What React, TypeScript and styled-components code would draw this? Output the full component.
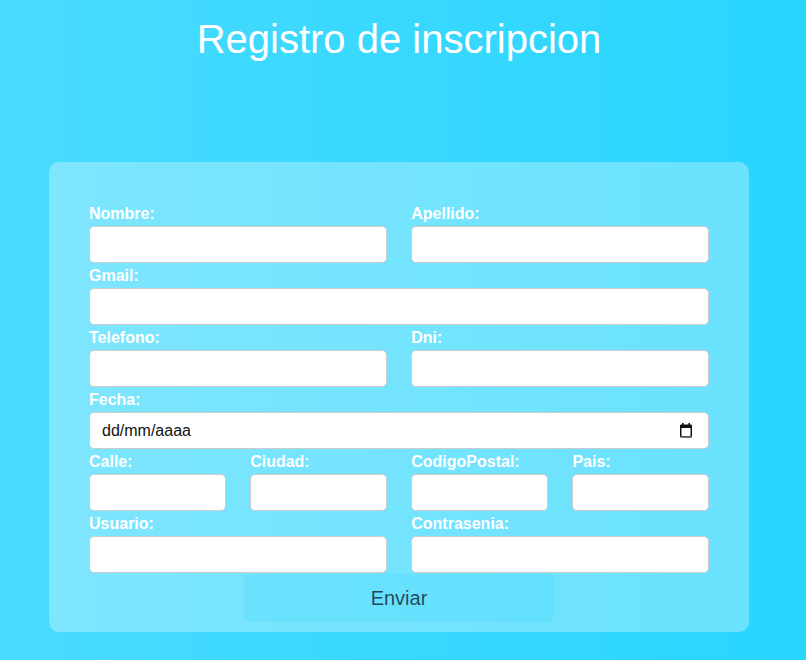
import React from "react";
import styled, { createGlobalStyle } from "styled-components";

const GlobalStyle = createGlobalStyle`
  html, body {
    margin: 0;
    padding: 0;
  }
  body {
    font-family: "Liberation Sans", Arial, sans-serif;
  }
  * { box-sizing: border-box; }
`;

const Page = styled.div`
  min-height: 100vh;
  background: linear-gradient(to right, #49dbfe, #28d5fe);
  display: flex;
  flex-direction: column;
  align-items: center;
  padding: 16px 8px 0 0;
`;

const Title = styled.h1`
  margin: 0;
  font-size: 40px;
  line-height: 46px;
  font-weight: normal;
  color: #ffffff;
  text-align: center;
`;

const Card = styled.form`
  margin-top: 100px;
  width: 700px;
  padding: 39px 40px 10px;
  background: rgba(255, 255, 255, 0.3);
  border-radius: 10px;
  display: flex;
  flex-direction: column;
  align-items: center;
`;

const Grid = styled.div`
  width: 100%;
  display: grid;
  grid-template-columns: repeat(4, 1fr);
  column-gap: 24.5px;
`;

const Field = styled.div<{ $span: number }>`
  grid-column: span ${(p) => p.$span};
  display: flex;
  flex-direction: column;
  position: relative;
`;

const Label = styled.label`
  display: block;
  margin-top: 4px;
  margin-bottom: 3px;
  font-size: 16px;
  line-height: 18px;
  font-weight: bold;
  color: #ffffff;
`;

const Input = styled.input`
  width: 100%;
  height: 37px;
  margin: 0;
  padding: 0 12px;
  border: 1px solid #cccccc;
  border-radius: 5px;
  background: #ffffff;
  font-family: "Liberation Sans", Arial, sans-serif;
  font-size: 16px;
  color: #111111;
  outline: none;
  &::placeholder {
    color: #111111;
  }
`;

const CalendarIcon = styled.svg`
  position: absolute;
  right: 16px;
  bottom: 11px;
  width: 14px;
  height: 15px;
  pointer-events: none;
`;

const Button = styled.button`
  margin-top: 1px;
  width: 50%;
  height: 48px;
  border: none;
  border-radius: 6px;
  background: rgba(40, 213, 255, 0.16);
  color: rgba(20, 45, 60, 0.85);
  font-family: "Liberation Sans", Arial, sans-serif;
  font-size: 20px;
  cursor: pointer;
`;

type F = { label: string; span: number; type?: string };

const fields: F[] = [
  { label: "Nombre:", span: 2 },
  { label: "Apellido:", span: 2 },
  { label: "Gmail:", span: 4 },
  { label: "Telefono:", span: 2 },
  { label: "Dni:", span: 2 },
  { label: "Fecha:", span: 4, type: "date" },
  { label: "Calle:", span: 1 },
  { label: "Ciudad:", span: 1 },
  { label: "CodigoPostal:", span: 1 },
  { label: "Pais:", span: 1 },
  { label: "Usuario:", span: 2 },
  { label: "Contrasenia:", span: 2, type: "password" },
];

export default function App() {
  return (
    <>
      <GlobalStyle />
      <Page>
        <Title>Registro de inscripcion</Title>
        <Card onSubmit={(e) => e.preventDefault()}>
          <Grid>
            {fields.map((f, i) => (
              <Field key={i} $span={f.span}>
                <Label htmlFor={`f${i}`}>{f.label}</Label>
                {f.type === "date" ? (
                  <>
                    <Input id={`f${i}`} type="text" placeholder="dd/mm/aaaa" readOnly />
                    <CalendarIcon viewBox="0 0 14 15">
                      <rect x="3" y="0" width="1.6" height="3" fill="#111" />
                      <rect x="9.4" y="0" width="1.6" height="3" fill="#111" />
                      <rect x="1.75" y="2.25" width="10.5" height="11.5" fill="none" stroke="#111" strokeWidth="1.5" rx="0.5" />
                      <rect x="1.5" y="2" width="11" height="3" fill="#111" />
                      <rect x="1.5" y="13.2" width="11" height="1.3" fill="#666" />
                    </CalendarIcon>
                  </>
                ) : (
                  <Input id={`f${i}`} type={f.type ?? "text"} />
                )}
              </Field>
            ))}
          </Grid>
          <Button type="submit">Enviar</Button>
        </Card>
      </Page>
    </>
  );
}
